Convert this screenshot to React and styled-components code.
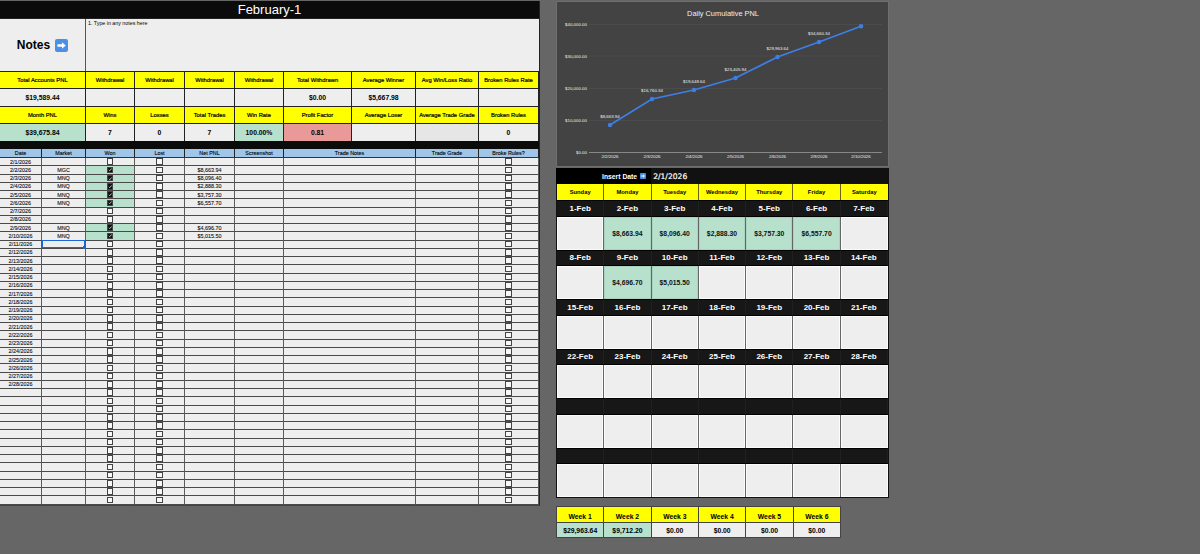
import React from "react";
import styled, { createGlobalStyle } from "styled-components";

const GlobalStyle = createGlobalStyle`
  * { box-sizing: border-box; }
  html, body { margin: 0; height: 100%; background: #666666; overflow: hidden; }
  body { font-family: "Liberation Sans", Arial, sans-serif; color: #000; }
`;

const YELLOW = "#ffff00";
const GREEN = "#b7e1cd";
const RED = "#ea9999";
const SHEET = "#eeeeee";

const Page = styled.div`
  display: flex;
  align-items: flex-start;
  width: 1200px;
  height: 554px;
  padding-top: 1px;
  gap: 16px;
`;

// left sheet
const Sheet = styled.div`
  width: 540px;
  display: flex;
  flex-direction: column;
  background: #111;
  border-right: 1px solid #222;
  border-bottom: 1px solid #444;
`;

const Title = styled.div`
  height: 17px;
  background: #0b0b0b;
  color: #fff;
  font-size: 13px;
  line-height: 17px;
  text-align: center;
`;

const NotesRow = styled.div`
  display: flex;
  height: 53px;
  border-top: 1px solid #222;
  background: ${SHEET};
`;

const NotesLabel = styled.div`
  width: 86px;
  display: flex;
  align-items: center;
  justify-content: center;
  gap: 5px;
  font-size: 12px;
  font-weight: 700;
  border-right: 1px solid #555;
  svg { width: 13px; height: 13px; }
`;

const NotesText = styled.div`
  flex: 1;
  padding: 1px 2px;
  font-size: 5.3px;
  line-height: 7px;
`;

const MetricGrid = styled.div`
  display: grid;
  grid-template-columns: 86px 49px 50px 50px 49px 68px 64px 63px 60px;
  grid-template-rows: 17px 18px 17px 18px;
`;

const MetricCell = styled.div`
  display: flex;
  align-items: center;
  justify-content: center;
  white-space: nowrap;
  overflow: hidden;
  border-top: 1px solid #222;
  border-right: 1px solid #222;
  background: ${(p) => p.$bg || SHEET};
  font-size: ${(p) => (p.$bg === YELLOW ? "5.8px" : "6.8px")};
  font-weight: ${(p) => (p.$bg === YELLOW ? 400 : 700)};
  -webkit-text-stroke: ${(p) => (p.$bg === YELLOW ? "0.2px #000" : "0")};
`;

const Divider = styled.div`
  height: 8px;
  background: #0b0b0b;
`;

const TradeGrid = styled.div`
  display: grid;
  grid-template-columns: 42px 44px 49px 50px 50px 49px 132px 63px 60px;
  grid-template-rows: 9px;
  grid-auto-rows: 8.26px;
  background: ${SHEET};
`;

const HeaderCell = styled.div`
  display: flex;
  align-items: center;
  justify-content: center;
  background: #9fc5e8;
  font-size: 5.4px;
  white-space: nowrap;
  -webkit-text-stroke: 0.1px #000;
  border-right: 1px solid #222;
  border-bottom: 1px solid #333;
`;

const Cell = styled.div`
  position: relative;
  display: flex;
  align-items: center;
  justify-content: center;
  font-size: 5.4px;
  white-space: nowrap;
  color: #111;
  -webkit-text-stroke: 0.1px #111;
  background: ${(p) => (p.$won ? GREEN : SHEET)};
  border-right: 1px solid #5c5c5c;
  border-bottom: 1px solid #4a4a4a;
`;

const Selection = styled.div`
  position: absolute;
  inset: -1px 0 0 0;
  border: 1px solid #1a66d6;
  &::after {
    content: "";
    position: absolute;
    right: -2px;
    bottom: -2px;
    width: 3px;
    height: 3px;
    background: #1a66d6;
  }
`;

const Box = styled.div`
  width: 6.5px;
  height: 6.5px;
  display: flex;
  align-items: center;
  justify-content: center;
  border: 1px solid #444;
  background: ${(p) => (p.$checked ? "#111" : "#f8f8f8")};
  svg { width: 5px; height: 5px; display: block; }
`;

// right column
const Side = styled.div`
  width: 333px;
  display: flex;
  flex-direction: column;
`;

const ChartPanel = styled.div`
  height: 166px;
  background: #434343;
  border: 1px solid #6f6f6f;
  svg { display: block; width: 100%; height: 100%; }
`;

const InsertRow = styled.div`
  display: grid;
  grid-template-columns: 2fr 5fr;
  height: 16px;
  margin-top: 1px;
  background: #000;
  color: #fff;
`;

const InsertLabel = styled.div`
  display: flex;
  align-items: center;
  justify-content: flex-end;
  gap: 3px;
  padding-right: 5px;
  font-size: 6.8px;
  font-weight: 700;
  svg { width: 6px; height: 6px; }
`;

const InsertValue = styled.div`
  display: flex;
  align-items: center;
  padding-left: 2px;
  background: #111;
  font-family: "DejaVu Sans", sans-serif;
  font-size: 7.6px;
  -webkit-text-stroke: 0.2px #fff;
`;

const Calendar = styled.div`
  display: grid;
  grid-template-columns: repeat(7, 1fr);
  grid-template-rows: 16px repeat(6, 16.5px 33px);
  background: #111;
  border: 1px solid #111;
  border-top: 0;
`;

const DayName = styled.div`
  display: flex;
  align-items: center;
  justify-content: center;
  background: ${YELLOW};
  font-size: 5.8px;
  font-weight: 700;
  border-right: 1px solid #66661a;
  &:nth-child(7) { border-right: 0; }
`;

const DateCell = styled.div`
  display: flex;
  align-items: center;
  justify-content: center;
  background: #171717;
  color: #fff;
  font-size: 8px;
  font-weight: 700;
  border-top: 1px solid #000;
  border-bottom: 1px solid #000;
  border-right: 1px solid #1f1f1f;
`;

const DayCell = styled.div`
  display: flex;
  align-items: center;
  justify-content: center;
  background: ${(p) => (p.$filled ? GREEN : SHEET)};
  font-size: 6.8px;
  font-weight: 700;
  color: #111;
  border-right: 1px solid #666;
  box-shadow: inset 0 0 0 1px ${(p) => (p.$filled ? "#a9d3bf" : "#fbfbfb")};
  &:nth-child(14n + 7) { border-right: 0; }
`;

const WeekGrid = styled.div`
  display: grid;
  grid-template-columns: repeat(6, 1fr);
  grid-template-rows: 16px 15px;
  margin-top: 8px;
  width: 285px;
  background: #333;
  border-top: 1px solid #444;
  border-left: 1px solid #444;
`;

const WeekHead = styled.div`
  display: flex;
  align-items: center;
  justify-content: center;
  padding-top: 3px;
  background: ${YELLOW};
  font-size: 6.8px;
  font-weight: 700;
  border-right: 1px solid #444;
  border-bottom: 1px solid #444;
`;

const WeekValue = styled.div`
  display: flex;
  align-items: center;
  justify-content: center;
  background: ${(p) => (p.$filled ? GREEN : SHEET)};
  font-size: 6.8px;
  font-weight: 700;
  border-right: 1px solid #444;
  border-bottom: 1px solid #444;
`;

const metricRows = [
  [
    ["Total Accounts PNL"], ["Withdrawal"], ["Withdrawal"], ["Withdrawal"], ["Withdrawal"],
    ["Total Withdrawn"], ["Average Winner"], ["Avg Win/Loss Ratio"], ["Broken Rules Rate"],
  ],
  [["$19,589.44"], [""], [""], [""], [""], ["$0.00"], ["$5,667.98"], [""], [""]],
  [
    ["Month PNL"], ["Wins"], ["Losses"], ["Total Trades"], ["Win Rate"],
    ["Profit Factor"], ["Average Loser"], ["Average Trade Grade"], ["Broken Rules"],
  ],
  [
    ["$39,675.84", GREEN], ["7"], ["0"], ["7"], ["100.00%", GREEN],
    ["0.81", RED], [""], ["", "#e6e6e6"], ["0"],
  ],
];

const headers = ["Date", "Market", "Won", "Lost", "Net PNL", "Screenshot", "Trade Notes", "Trade Grade", "Broke Rules?"];

const trades = {
  2: ["MGC", "$8,663.94"],
  3: ["MNQ", "$8,096.40"],
  4: ["MNQ", "$2,888.30"],
  5: ["MNQ", "$3,757.30"],
  6: ["MNQ", "$6,557.70"],
  9: ["MNQ", "$4,696.70"],
  10: ["MNQ", "$5,015.50"],
};

const rows = Array.from({ length: 42 }, (_, i) => i + 1);
const dayNames = ["Sunday", "Monday", "Tuesday", "Wednesday", "Thursday", "Friday", "Saturday"];

const calendarValues = {
  2: "$8,663.94", 3: "$8,096.40", 4: "$2,888.30", 5: "$3,757.30", 6: "$6,557.70",
  9: "$4,696.70", 10: "$5,015.50",
};

const weeks = [
  ["Week 1", "$29,963.64", true],
  ["Week 2", "$9,712.20", true],
  ["Week 3", "$0.00"],
  ["Week 4", "$0.00"],
  ["Week 5", "$0.00"],
  ["Week 6", "$0.00"],
];

const points = [
  [53, 123, "$8,663.94", "2/2/2026"],
  [95, 97, "$16,760.34", "2/3/2026"],
  [137, 88, "$19,648.64", "2/4/2026"],
  [178.5, 76, "$23,405.94", "2/5/2026"],
  [220.5, 55, "$29,963.64", "2/6/2026"],
  [262, 40, "$34,660.34", "2/9/2026"],
  [304, 24.3, "", "2/10/2026"],
];

const ticks = [
  [22.5, "$40,000.00"],
  [54, "$30,000.00"],
  [86.5, "$20,000.00"],
  [118.5, "$10,000.00"],
  [150.5, "$0.00"],
];

function ArrowIcon() {
  return (
    <svg viewBox="0 0 16 16">
      <rect width="16" height="16" rx="2.5" fill="#4a90e8" />
      <path d="M3 6.6h5.6V4l4.6 4-4.6 4V9.4H3z" fill="#fff" />
    </svg>
  );
}

function CheckBox({ checked }) {
  return (
    <Box $checked={checked}>
      {checked && (
        <svg viewBox="0 0 8 8">
          <path d="M1.5 4.5l1.6 1.6 3.4-4" fill="none" stroke="#fff" strokeWidth="1.3" />
        </svg>
      )}
    </Box>
  );
}

function PnlChart() {
  const line = points.map((p) => `${p[0]},${p[1]}`).join(" ");
  return (
    <ChartPanel>
      <svg viewBox="0 0 331 164">
        <text x="166" y="14" fill="#f0f0f0" fontSize="7.4" textAnchor="middle">
          Daily Cumulative PNL
        </text>
        {ticks.map(([y, label], i) => (
          <g key={label}>
            <line x1="32" x2="325" y1={y} y2={y} stroke={i === 4 ? "#999" : "#535353"} strokeWidth={i === 4 ? 0.8 : 0.6} />
            <text x="30" y={y + 1.5} fill="#eee" fontSize="4.4" textAnchor="end">{label}</text>
          </g>
        ))}
        <polyline points={line} fill="none" stroke="#3d7fe6" strokeWidth="1.7" />
        {points.map(([x, y, label, date]) => (
          <g key={date}>
            <circle cx={x} cy={y} r="2.2" fill="#3d7fe6" />
            {label && <text x={x} y={y - 7} fill="#f0f0f0" fontSize="4.4" textAnchor="middle">{label}</text>}
            <text x={x} y="155.5" fill="#eee" fontSize="4.4" textAnchor="middle">{date}</text>
          </g>
        ))}
      </svg>
    </ChartPanel>
  );
}

function Trades() {
  return (
    <TradeGrid>
      {headers.map((h) => <HeaderCell key={h}>{h}</HeaderCell>)}
      {rows.map((n) => {
        const trade = trades[n];
        return (
          <React.Fragment key={n}>
            <Cell>{n <= 28 ? `2/${n}/2026` : ""}</Cell>
            <Cell>
              {trade ? trade[0] : ""}
              {n === 11 && <Selection />}
            </Cell>
            <Cell $won={!!trade}><CheckBox checked={!!trade} /></Cell>
            <Cell><CheckBox /></Cell>
            <Cell>{trade ? trade[1] : ""}</Cell>
            <Cell />
            <Cell />
            <Cell />
            <Cell><CheckBox /></Cell>
          </React.Fragment>
        );
      })}
    </TradeGrid>
  );
}

function CalendarWeeks() {
  const weekRows = [0, 1, 2, 3, 4, 5];
  const days = [0, 1, 2, 3, 4, 5, 6];
  return (
    <Calendar>
      {dayNames.map((d) => <DayName key={d}>{d}</DayName>)}
      {weekRows.map((w) => (
        <React.Fragment key={w}>
          {days.map((d) => {
            const n = w * 7 + d + 1;
            return <DateCell key={d}>{n <= 28 ? `${n}-Feb` : ""}</DateCell>;
          })}
          {days.map((d) => {
            const value = calendarValues[w * 7 + d + 1];
            return <DayCell key={d} $filled={!!value}>{value}</DayCell>;
          })}
        </React.Fragment>
      ))}
    </Calendar>
  );
}

export default function App() {
  return (
    <>
      <GlobalStyle />
      <Page>
        <Sheet>
          <Title>February-1</Title>
          <NotesRow>
            <NotesLabel>Notes <ArrowIcon /></NotesLabel>
            <NotesText>1. Type in any notes here</NotesText>
          </NotesRow>
          <MetricGrid>
            {metricRows.flatMap((row, r) =>
              row.map(([text, color], c) => (
                <MetricCell key={`${r}-${c}`} $bg={r % 2 === 0 ? YELLOW : color}>{text}</MetricCell>
              ))
            )}
          </MetricGrid>
          <Divider />
          <Trades />
        </Sheet>
        <Side>
          <PnlChart />
          <InsertRow>
            <InsertLabel>Insert Date <ArrowIcon /></InsertLabel>
            <InsertValue>2/1/2026</InsertValue>
          </InsertRow>
          <CalendarWeeks />
          <WeekGrid>
            {weeks.map(([w]) => <WeekHead key={w}>{w}</WeekHead>)}
            {weeks.map(([w, v, filled]) => <WeekValue key={w} $filled={filled}>{v}</WeekValue>)}
          </WeekGrid>
        </Side>
      </Page>
    </>
  );
}
